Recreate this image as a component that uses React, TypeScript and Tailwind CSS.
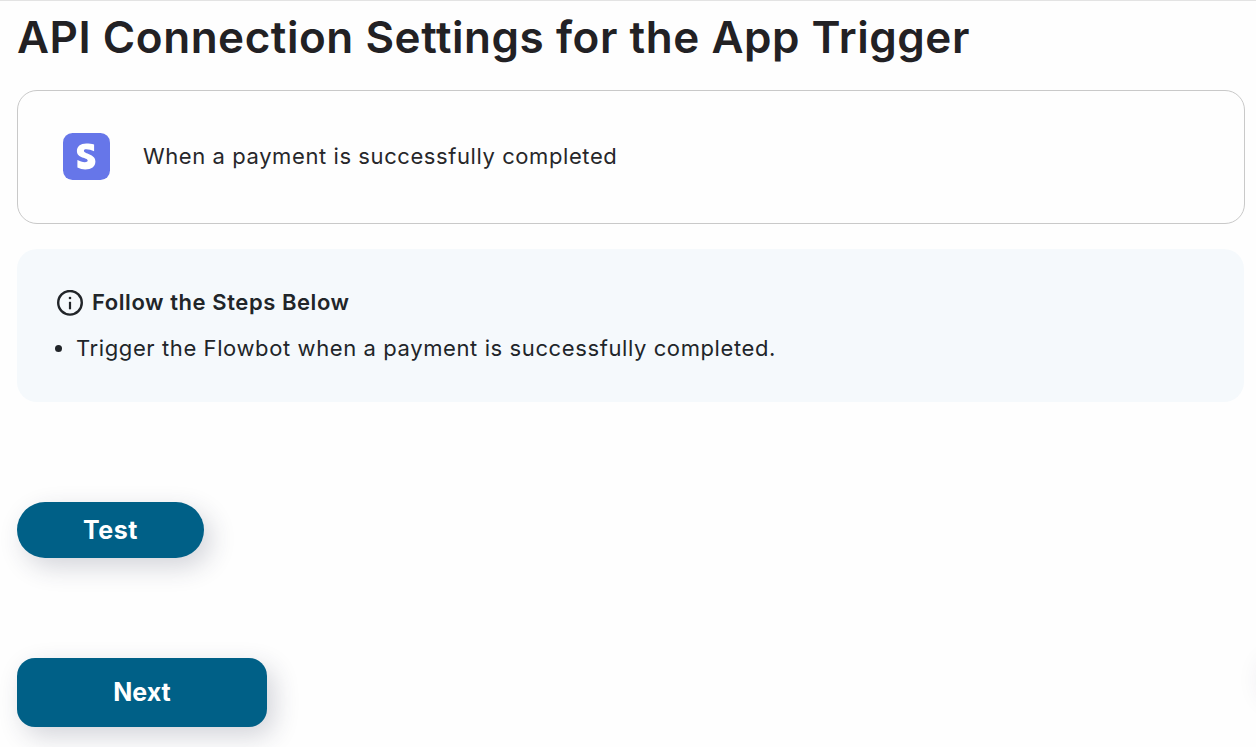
import type { ReactNode } from "react";

function StripeIcon() {
  return (
    <svg className="h-[47px] w-[47px]" viewBox="0 0 47 47">
      <rect width="47" height="47" rx="9.5" fill="#6676e9" />
      <path
        fill="#fff"
        d="M20.9 17.7c0-1 1-1.4 2.4-1.4 2.3 0 5.300.8 7.800 2V11.500c-2.500-.8-5-1.100-7.800-1.100-6 0-9.400 3-9.400 7.700 0 7.700 10.800 6.200 10.800 9.500 0 1.200-1.200 1.600-2.800 1.600-2.500 0-5.200-.9-7.500-2.100v7.400c2.500 1.300 5.200 1.900 7.800 1.900 6.200 0 10.200-2.900 10.200-8 0-8-11.500-7.200-11.500-10.700z"
      />
    </svg>
  );
}

function InfoIcon() {
  return (
    <svg className="mt-px h-[26px] w-[26px]" viewBox="0 0 26 26" fill="none">
      <circle cx="13" cy="12.8" r="11.8" stroke="#212529" strokeWidth="2.4" />
      <path d="M13 11.8v7.5" stroke="#212529" strokeWidth="2.2" />
      <circle cx="13" cy="8" r="1.3" fill="#212529" />
    </svg>
  );
}

function Button({ className, children }: { className: string; children: ReactNode }) {
  return (
    <button
      type="button"
      className={`block bg-[#006087] text-center text-[25px] font-bold text-white shadow-[7px_9px_26px_rgba(40,45,75,0.2)] ${className}`}
    >
      {children}
    </button>
  );
}

export default function App() {
  return (
    <main className="relative h-[747px] overflow-hidden border-t border-[#e3e3e3] bg-[#fefefe] pl-[17px] pr-[11px] font-['Inter',sans-serif] tracking-[0.6px] text-[#212529]">
      <h1 className="mt-2 h-[57px] whitespace-nowrap text-[44px] font-semibold leading-[56px] tracking-[0.55px] text-[#222124]">
        API Connection Settings for the App Trigger
      </h1>
      <section className="mt-6 flex h-[134px] items-center rounded-[20px] border border-[#c9c9c9] pb-[2px] pl-[45px]">
        <StripeIcon />
        <p className="ml-[33px] text-[22px] tracking-[0.58px] text-[#27272a]">
          When a payment is successfully completed
        </p>
      </section>
      <section className="mt-[25px] mr-px h-[153px] rounded-[20px] bg-[#f5f9fc] pl-[40px] pt-[37px]">
        <h2 className="flex h-8 items-center gap-[9px] text-[22px] font-semibold tracking-[0.57px]">
          <InfoIcon />
          Follow the Steps Below
        </h2>
        <ul className="mt-[14px] list-disc pl-[19px] text-[22px] leading-8">
          <li>Trigger the Flowbot when a payment is successfully completed.</li>
        </ul>
      </section>
      <Button className="mt-[100px] h-14 w-[187px] rounded-full pt-px">Test</Button>
      <Button className="mt-[100px] h-[69px] w-[250px] rounded-[18px] tracking-normal">Next</Button>
      {/* shadow of the floating side tab, parked past the right edge */}
      <div className="absolute -right-[54px] bottom-[42px] h-[50px] w-[50px] rounded-full shadow-[0_0_24px_rgba(60,40,90,0.1)]" />
    </main>
  );
}
